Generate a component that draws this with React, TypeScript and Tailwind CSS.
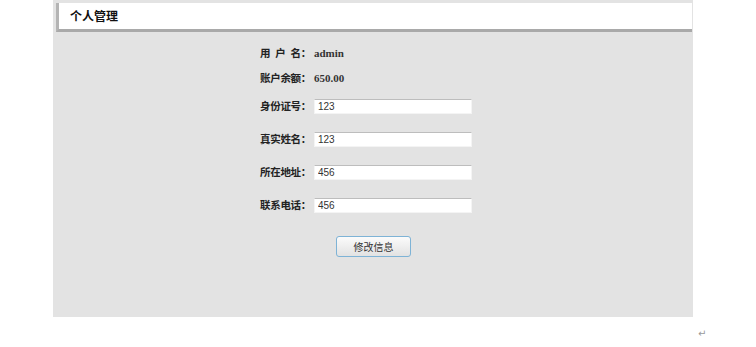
const cjk = "font-['Noto_Sans_CJK_SC',sans-serif]";

type Field = { label: string; value: string };

const fields: Field[] = [
  { label: "身份证号：", value: "123" },
  { label: "真实姓名：", value: "123" },
  { label: "所在地址：", value: "456" },
  { label: "联系电话：", value: "456" },
];

function Label({ children, wide }: { children: string; wide?: boolean }) {
  return (
    <span
      className={`w-[54px] shrink-0 whitespace-nowrap text-[10.5px] font-bold leading-none tracking-[-0.3px] text-[#222] ${wide ? "[word-spacing:3px]" : ""} ${cjk}`}
    >
      {children}
    </span>
  );
}

export default function App() {
  return (
    <div className="relative h-[347px] w-[756px] bg-white">
      <div className="ml-[53px] flex h-[317px] w-[640px] flex-col bg-[#e3e3e3] pt-[3px]">
        <div className="ml-[3px] mr-[1px] flex h-[29px] items-center border-b-[3px] border-l-[3px] border-b-[#a9a9a9] border-l-[#b4b4b4] bg-white pl-[11px]">
          <span className={`text-[12px] font-bold text-[#111] ${cjk}`}>个人管理</span>
        </div>

        <div className="ml-[207px] flex flex-col">
          <div className="mt-[13px] flex h-[16px] items-center">
            <Label wide>用 户 名：</Label>
            <span className="font-['Liberation_Serif',serif] text-[11px] font-bold text-[#333]">admin</span>
          </div>
          <div className="mt-[9px] flex h-[16px] items-center">
            <Label>账户余额：</Label>
            <span className="font-['Liberation_Serif',serif] text-[11px] font-bold text-[#333]">650.00</span>
          </div>

          {fields.map((field, i) => (
            <div key={field.label} className={`flex h-[15px] items-center ${i === 0 ? "mt-[13px]" : "mt-[18px]"}`}>
              <Label>{field.label}</Label>
              <input
                defaultValue={field.value}
                className="h-[15px] w-[158px] border border-[#f4f4f4] border-t-[#bdbdbd] bg-white px-[3px] font-['Liberation_Sans',sans-serif] text-[10px] text-[#333] outline-none"
              />
            </div>
          ))}

          <button
            className={`ml-[76px] mt-[23px] h-[21px] w-[75px] rounded-[3px] border border-[#7eb3d6] bg-gradient-to-b from-[#fbfbfb] to-[#e2e2e2] text-[10px] text-[#333] ${cjk}`}
          >
            修改信息
          </button>
        </div>
      </div>
      <span className="absolute left-[698px] top-[326px] font-['DejaVu_Sans',sans-serif] text-[10px] text-[#9a9a9a]">↵</span>
    </div>
  );
}
